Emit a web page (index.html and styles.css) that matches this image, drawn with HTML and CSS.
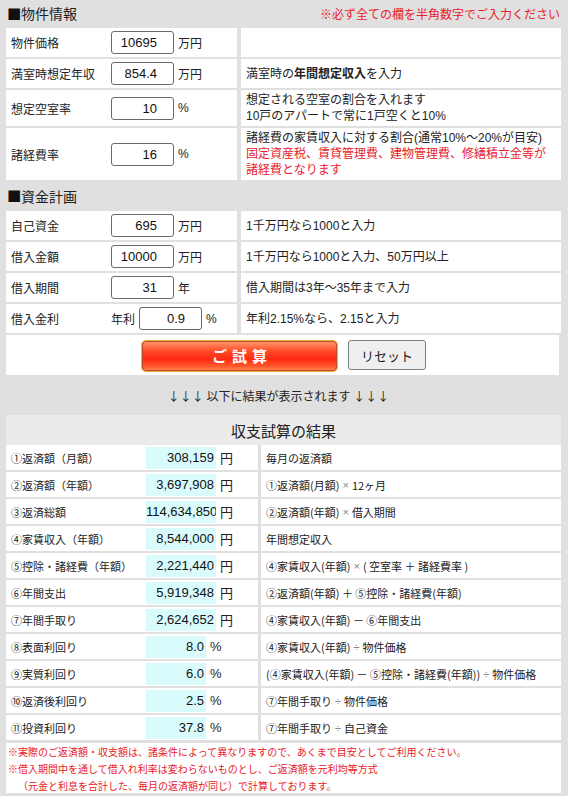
FILE: index.html
```html
<!DOCTYPE html>
<html lang="ja">
<head>
<meta charset="utf-8">
<title>収支シミュレーション</title>
<link rel="stylesheet" href="styles.css">
</head>
<body>
<div class="page">
  <div class="sec-head first">
    <span class="sec-title"><span class="sq">■</span>物件情報</span>
    <span class="note">※必ず全ての欄を半角数字でご入力ください</span>
  </div>
  <div class="form-table">
    <div class="fcell"><span class="lbl">物件価格</span><input class="inp" type="text" value="10695"><span class="unit">万円</span></div>
    <div class="dcell"></div>
    <div class="fcell"><span class="lbl">満室時想定年収</span><input class="inp" type="text" value="854.4"><span class="unit">万円</span></div>
    <div class="dcell"><span>満室時の<b>年間想定収入</b>を入力</span></div>
    <div class="fcell"><span class="lbl">想定空室率</span><input class="inp" type="text" value="10"><span class="unit">%</span></div>
    <div class="dcell"><span>想定される空室の割合を入れます</span><span>10戸のアパートで常に1戸空くと10%</span></div>
    <div class="fcell"><span class="lbl">諸経費率</span><input class="inp" type="text" value="16"><span class="unit">%</span></div>
    <div class="dcell"><span>諸経費の家賃収入に対する割合(通常10%～20%が目安)</span><span class="red">固定資産税、賃貸管理費、建物管理費、修繕積立金等が</span><span class="red">諸経費となります</span></div>
  </div>

  <div class="sec-head second">
    <span class="sec-title"><span class="sq">■</span>資金計画</span>
  </div>
  <div class="form-table">
    <div class="fcell"><span class="lbl">自己資金</span><input class="inp" type="text" value="695"><span class="unit">万円</span></div>
    <div class="dcell"><span>1千万円なら1000と入力</span></div>
    <div class="fcell"><span class="lbl">借入金額</span><input class="inp" type="text" value="10000"><span class="unit">万円</span></div>
    <div class="dcell"><span>1千万円なら1000と入力、50万円以上</span></div>
    <div class="fcell"><span class="lbl">借入期間</span><input class="inp" type="text" value="31"><span class="unit">年</span></div>
    <div class="dcell"><span>借入期間は3年～35年まで入力</span></div>
    <div class="fcell"><span class="lbl">借入金利</span><span class="pre">年利</span><input class="inp" type="text" value="0.9"><span class="unit">%</span></div>
    <div class="dcell"><span>年利2.15%なら、2.15と入力</span></div>
    <div class="btn-row">
      <button class="calc" type="button">ご試算</button>
      <button class="reset" type="button">リセット</button>
    </div>
  </div>

  <div class="arrows">↓↓↓ 以下に結果が表示されます ↓↓↓</div>

  <div class="res-head">収支試算の結果</div>
  <div class="res-table">
    <div class="rcell"><span class="rlbl">①返済額（月額）</span><span class="val">308,159</span><span class="runit">円</span></div>
    <div class="rdesc">毎月の返済額</div>
    <div class="rcell"><span class="rlbl">②返済額（年額）</span><span class="val">3,697,908</span><span class="runit">円</span></div>
    <div class="rdesc">①返済額(月額) <span class="op">×</span> 12ヶ月</div>
    <div class="rcell"><span class="rlbl">③返済総額</span><span class="val">114,634,850</span><span class="runit">円</span></div>
    <div class="rdesc">②返済額(年額) <span class="op">×</span> 借入期間</div>
    <div class="rcell"><span class="rlbl">④家賃収入（年額）</span><span class="val">8,544,000</span><span class="runit">円</span></div>
    <div class="rdesc">年間想定収入</div>
    <div class="rcell"><span class="rlbl">⑤控除・諸経費（年額）</span><span class="val">2,221,440</span><span class="runit">円</span></div>
    <div class="rdesc">④家賃収入(年額) <span class="op">×</span> ( 空室率 ＋ 諸経費率 )</div>
    <div class="rcell"><span class="rlbl">⑥年間支出</span><span class="val">5,919,348</span><span class="runit">円</span></div>
    <div class="rdesc">②返済額(年額) ＋ ⑤控除・諸経費(年額)</div>
    <div class="rcell"><span class="rlbl">⑦年間手取り</span><span class="val">2,624,652</span><span class="runit">円</span></div>
    <div class="rdesc">④家賃収入(年額) － ⑥年間支出</div>
    <div class="rcell"><span class="rlbl">⑧表面利回り</span><span class="val pct">8.0</span><span class="runit">%</span></div>
    <div class="rdesc">④家賃収入(年額) <span class="op">÷</span> 物件価格</div>
    <div class="rcell"><span class="rlbl">⑨実質利回り</span><span class="val pct">6.0</span><span class="runit">%</span></div>
    <div class="rdesc">(④家賃収入(年額) － ⑤控除・諸経費(年額)) <span class="op">÷</span> 物件価格</div>
    <div class="rcell"><span class="rlbl">⑩返済後利回り</span><span class="val pct">2.5</span><span class="runit">%</span></div>
    <div class="rdesc">⑦年間手取り <span class="op">÷</span> 物件価格</div>
    <div class="rcell"><span class="rlbl">⑪投資利回り</span><span class="val pct">37.8</span><span class="runit">%</span></div>
    <div class="rdesc">⑦年間手取り <span class="op">÷</span> 自己資金</div>
  </div>

  <div class="foot">
    <p>※実際のご返済額・収支額は、諸条件によって異なりますので、あくまで目安としてご利用ください。</p>
    <p>※借入期間中を通して借入れ利率は変わらないものとし、ご返済額を元利均等方式</p>
    <p class="indent">（元金と利息を合計した、毎月の返済額が同じ）で計算しております。</p>
  </div>
</div>
</body>
</html>
```
FILE: styles.css
```css
* { box-sizing: border-box; }
html, body {
  margin: 0;
  padding: 0;
  background: #e0e0e0;
}
body {
  font-family: "Liberation Sans", "Noto Sans CJK JP", sans-serif;
  color: #222;
  font-size: 12px;
}
.page {
  width: 568px;
  padding: 0 7px 0 6px;
}
.sec-head {
  display: flex;
  align-items: center;
  justify-content: space-between;
}
.sec-head.first { height: 28px; padding: 0 0 2px 1px; }
.sec-head.second { height: 31px; padding: 0 0 0 1px; }
.sec-title {
  font-family: "Noto Sans CJK JP", sans-serif;
  font-size: 14px;
  color: #222;
  display: flex;
  align-items: center;
}
.sq {
  font-family: "DejaVu Sans", sans-serif;
  font-size: 15px;
  line-height: 1;
  width: 14px;
  color: #111;
}
.note {
  font-size: 12px;
  color: #e8202c;
  padding-right: 1px;
}
.red { color: #e8202c; }

.form-table {
  display: grid;
  grid-template-columns: 231px 1fr;
  column-gap: 4px;
  row-gap: 2px;
}
.fcell {
  background: #fff;
  display: flex;
  align-items: center;
  padding-left: 5px;
  min-height: 29px;
  font-size: 12px;
}
.lbl {
  width: 100px;
}
.pre {
  width: 28px;
}
.inp {
  width: 63px;
  height: 23px;
  border: 1px solid #6a6a6a;
  border-radius: 3px;
  font-family: "Liberation Sans", sans-serif;
  font-size: 13px;
  color: #111;
  text-align: right;
  padding: 0 16px 0 2px;
  margin: 0;
  background: #fff;
}
.unit {
  margin-left: 4px;
  font-size: 12px;
}
.dcell {
  background: #fff;
  display: flex;
  flex-direction: column;
  justify-content: center;
  padding: 2px 5px;
  min-height: 29px;
  font-size: 12px;
  line-height: 16px;
}
.btn-row {
  grid-column: 1 / span 2;
  background: #fff;
  height: 40px;
  margin-right: 2px;
  display: flex;
  align-items: center;
  justify-content: center;
  gap: 10px;
  padding-left: 2px;
}
.calc {
  width: 197px;
  height: 32px;
  border: 1px solid #e8b24e;
  border-radius: 5px;
  background: linear-gradient(#ff9a6e 0%, #ff4a26 35%, #ff2a12 60%, #ff5a2e 85%, #ff8a5c 100%);
  box-shadow: inset 0 0 0 1px #c04a26;
  color: #fff;
  font-family: "Noto Sans CJK JP", sans-serif;
  font-weight: bold;
  font-size: 15px;
  letter-spacing: 5px;
  padding: 0 0 0 5px;
  margin-top: 1px;
}
.reset {
  width: 78px;
  height: 30px;
  border: 1px solid #808080;
  border-radius: 3px;
  background: #efefef;
  color: #222;
  font-family: "Noto Sans CJK JP", sans-serif;
  font-size: 13px;
  padding: 0;
}
.arrows {
  height: 40px;
  display: flex;
  align-items: center;
  justify-content: center;
  font-family: "Noto Sans CJK JP", sans-serif;
  font-size: 12px;
  color: #222;
  padding-right: 10px;
}
.res-head {
  height: 30px;
  background: #ebebeb;
  display: flex;
  align-items: center;
  justify-content: center;
  font-family: "Noto Sans CJK JP", sans-serif;
  font-size: 15px;
  color: #222;
}
.res-table {
  display: grid;
  grid-template-columns: 252px 1fr;
  column-gap: 3px;
  row-gap: 2px;
}
.rcell {
  background: #fff;
  height: 25px;
  display: flex;
  align-items: center;
  padding-left: 5px;
  font-size: 11px;
}
.rlbl {
  width: 135px;
  flex: none;
  font-family: "Noto Sans CJK JP", sans-serif;
}
.val {
  width: 70px;
  height: 22px;
  flex: none;
  background: #d9fbfc;
  font-size: 13px;
  line-height: 22px;
  text-align: right;
  padding-right: 2px;
  overflow: hidden;
  white-space: nowrap;
  color: #111;
}
.val.pct { width: 60px; }
.runit {
  margin-left: 4px;
  font-size: 13px;
}
.rdesc {
  background: #fff;
  height: 25px;
  display: flex;
  align-items: center;
  padding-left: 5px;
  font-family: "Noto Sans CJK JP", sans-serif;
  font-size: 11px;
  white-space: nowrap;
}
.op {
  font-family: "Liberation Sans", sans-serif;
  color: #888;
  margin: 0 3px;
}
.foot {
  margin-top: 3px;
  background: #fff;
  height: 50px;
  padding: 0 2px;
  color: #e8202c;
  font-family: "Noto Sans CJK JP", sans-serif;
  font-size: 10px;
  line-height: 17px;
}
.foot p { margin: 0; }
.foot .indent { padding-left: 10px; }
```
